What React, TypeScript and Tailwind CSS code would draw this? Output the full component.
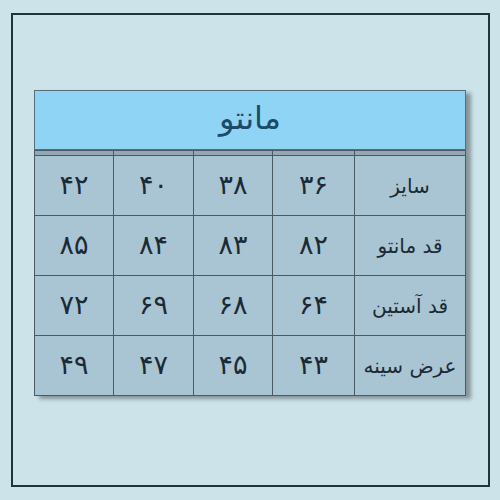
import React from "react";

const rows: string[][] = [
  ["سایز", "۳۶", "۳۸", "۴۰", "۴۲"],
  ["قد مانتو", "۸۲", "۸۳", "۸۴", "۸۵"],
  ["قد آستین", "۶۴", "۶۸", "۶۹", "۷۲"],
  ["عرض سینه", "۴۳", "۴۵", "۴۷", "۴۹"],
];

const App: React.FC = () => {
  return (
    <div
      className="w-[500px] h-[500px] bg-[#cce3ea] pt-[13px] pl-[11px]"
      style={{ fontFamily: '"DejaVu Sans", "Noto Sans", sans-serif' }}
    >
      <div className="w-[479px] h-[474px] border-2 border-[#1f343d] pt-[75px] pl-[21px]">
        {/* Header */}
        <div className="w-[432px] h-[60px] bg-[#8fd4f4] border border-[#5b6d78] flex items-center justify-center shadow-[5px_3px_4px_rgba(0,0,0,0.35)]">
          <span dir="rtl" className="text-[32px] text-[#1c4a68] leading-none pb-1">
            مانتو
          </span>
        </div>

        {/* Table */}
        <div
          dir="rtl"
          className="w-[432px] grid grid-cols-[110px_81px_78px_79px_78px] gap-[1px] bg-[#4a5962] border border-[#4a5962] shadow-[5px_3px_4px_rgba(0,0,0,0.35)]"
        >
          {[0, 1, 2, 3, 4].map((i) => (
            <div key={"b" + i} className="h-[4px] bg-[#93a8b3]" />
          ))}
          {rows.map((row) =>
            row.map((cell, i) => (
              <div
                key={row[0] + i}
                className={
                  i === 0
                    ? "h-[59px] bg-[#a9c4d2] flex items-center justify-center text-[20px] text-[#1b2a35]"
                    : "h-[59px] bg-[#a9c4d2] flex items-center justify-center text-[27px] text-[#1b2a35]"
                }
              >
                {cell}
              </div>
            ))
          )}
        </div>
      </div>
    </div>
  );
};

export default App;
